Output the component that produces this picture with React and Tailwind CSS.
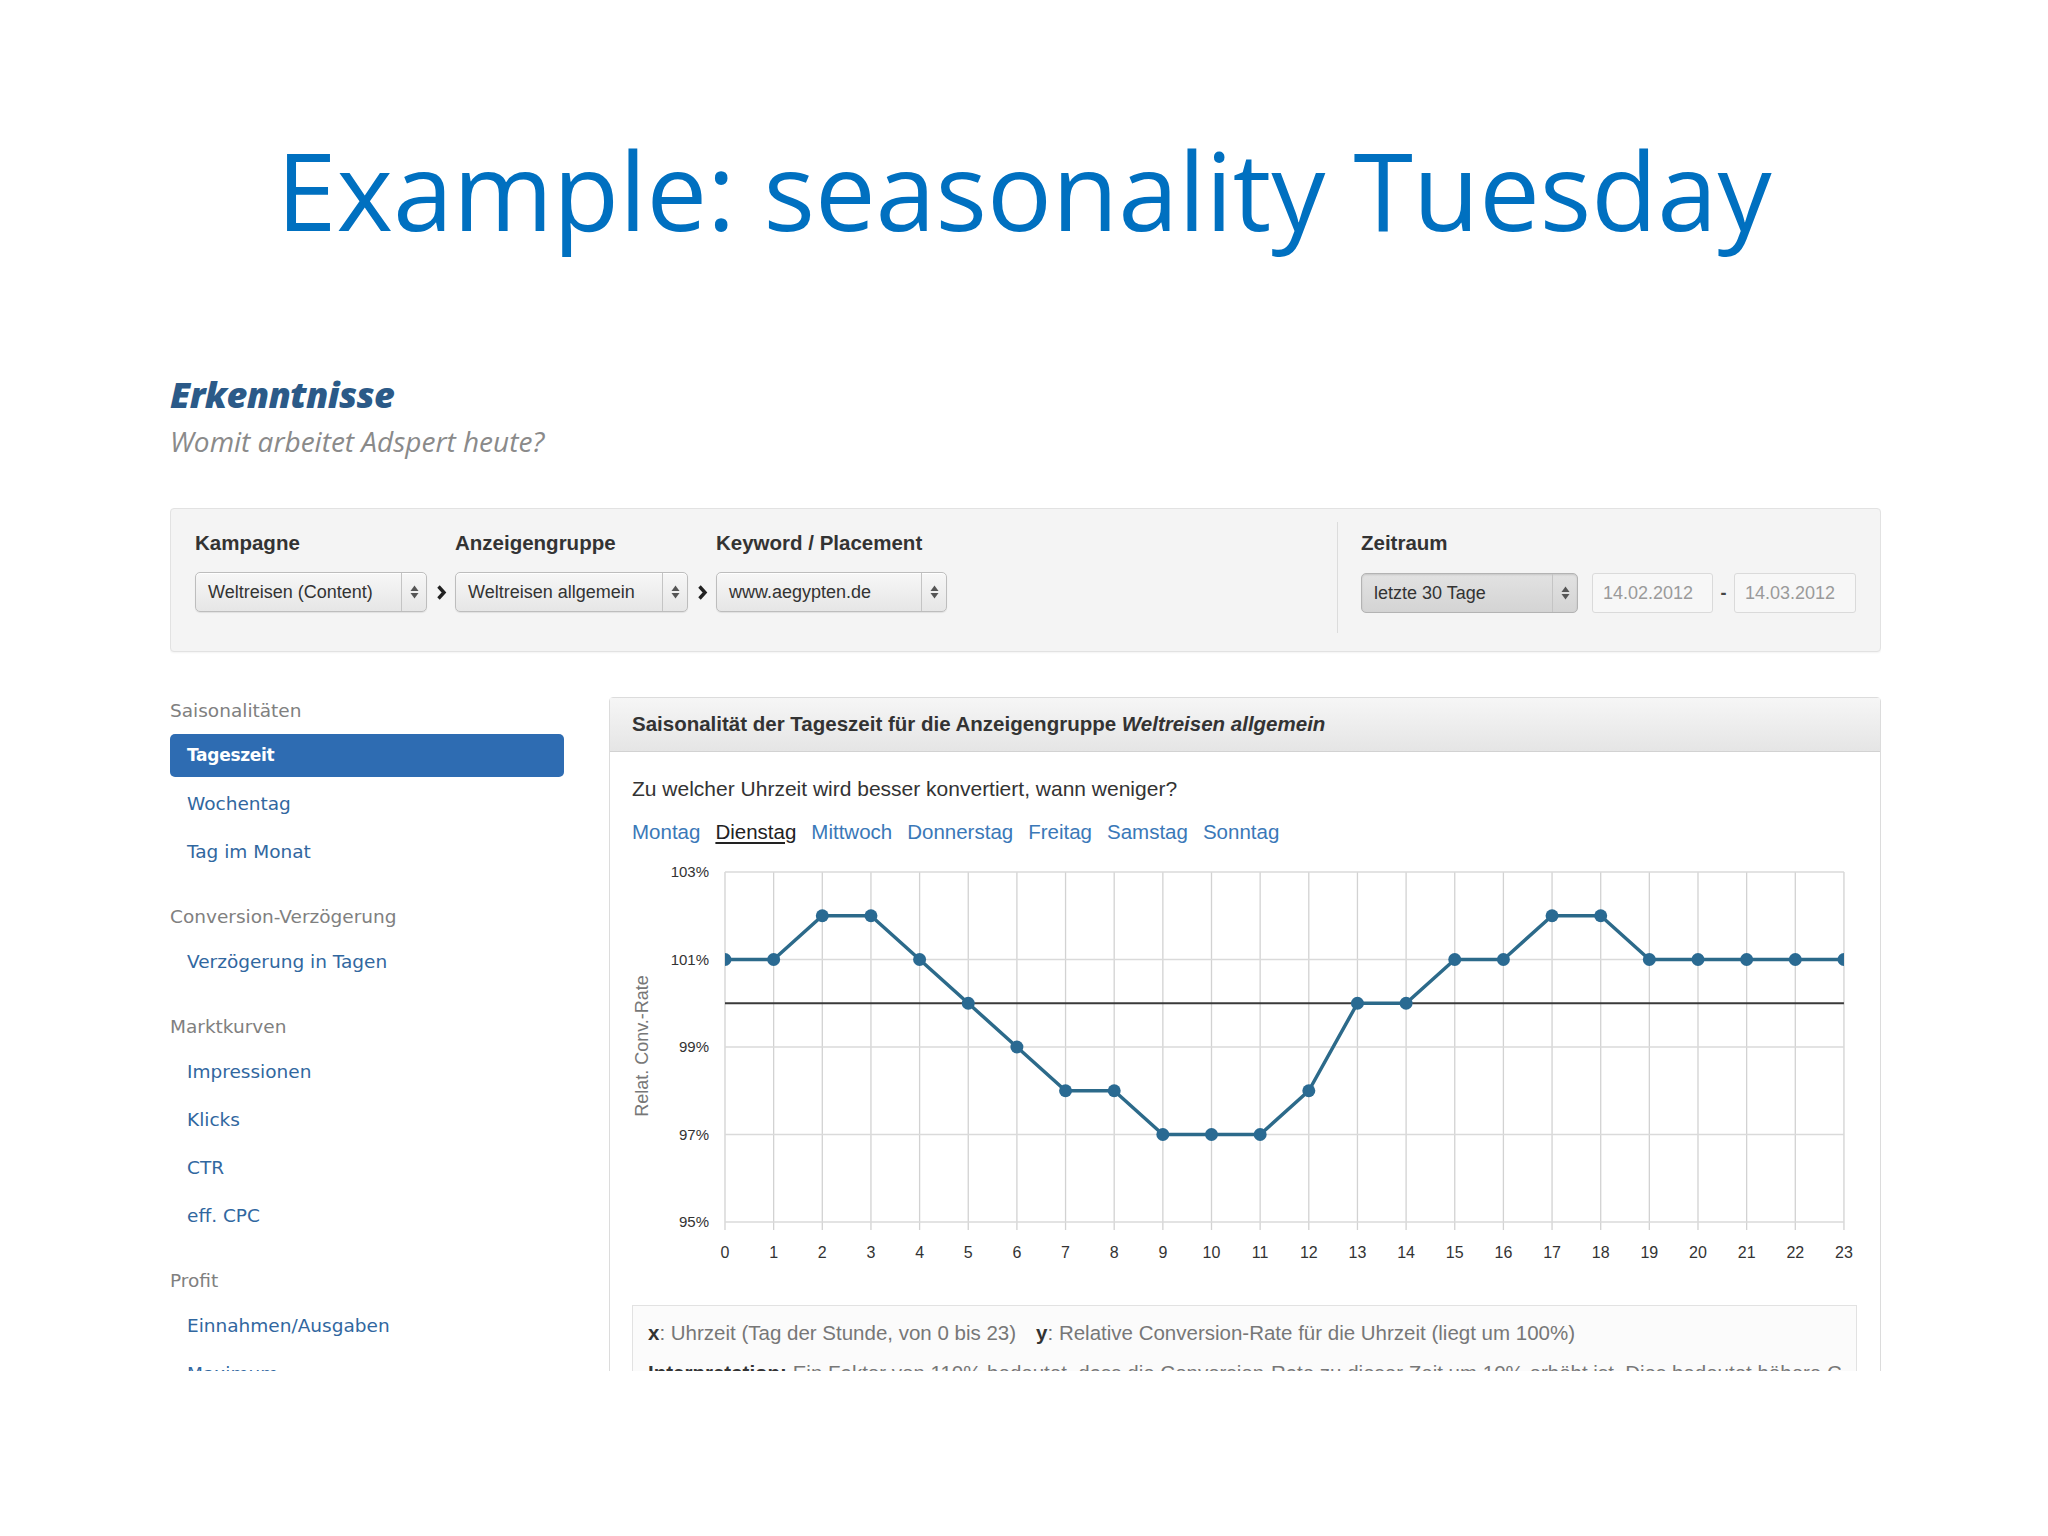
import React from "react";

// Data for the Dienstag (Tuesday) curve, hours 0..23
const VALUES = [101, 101, 102, 102, 101, 100, 99, 98, 98, 97, 97, 97, 98, 100, 100, 101, 101, 102, 102, 101, 101, 101, 101, 101];
const DAYS = ["Montag", "Dienstag", "Mittwoch", "Donnerstag", "Freitag", "Samstag", "Sonntag"];

const sx = (h) => 93 + h * 48.65;
const sy = (v) => 18 + (103 - v) * 43.75;

function UpDown() {
  return (
    <svg width="9" height="16" viewBox="0 0 9 16">
      <path d="M0.5 7 L4.5 1.5 L8.5 7 Z" fill="#555" />
      <path d="M0.5 9 L4.5 14.5 L8.5 9 Z" fill="#555" />
    </svg>
  );
}

function Select({ label, dark }) {
  return (
    <div
      className={`flex h-[40px] items-stretch rounded-[5px] border ${
        dark
          ? "border-[#b3b3b3] bg-gradient-to-b from-[#e2e2e2] to-[#d4d4d4] shadow-[inset_0_1px_2px_rgba(0,0,0,0.12)]"
          : "border-[#bdbdbd] bg-gradient-to-b from-[#f7f7f7] to-[#e6e6e6] shadow-[inset_0_1px_0_#fff,0_1px_1px_rgba(0,0,0,0.08)]"
      }`}
    >
      <div className="flex flex-1 items-center pl-[12px] text-[18px] text-[#333] whitespace-nowrap overflow-hidden">
        {label}
      </div>
      <div className="flex w-[25px] items-center justify-center border-l border-[#c4c4c4]">
        <UpDown />
      </div>
    </div>
  );
}

function Chevron() {
  return (
    <div className="mt-[63px] flex h-[40px] w-[28px] items-center justify-center">
      <svg width="11" height="15" viewBox="0 0 11 15">
        <path d="M2.5 1.5 L8 7.5 L2.5 13.5" fill="none" stroke="#222" strokeWidth="3.4" />
      </svg>
    </div>
  );
}

function Field({ label, width, children }) {
  return (
    <div className="mt-[22px] flex flex-col" style={{ width }}>
      <div className="text-[20.5px] font-bold leading-[24px] text-[#333]">{label}</div>
      <div className="mt-[17px]">{children}</div>
    </div>
  );
}

function FilterBar() {
  return (
    <div className="mt-[53px] flex h-[144px] items-start rounded-[4px] border border-[#e2e2e2] bg-[#f4f4f4] pl-[24px] pr-[24px] shadow-[0_1px_2px_rgba(0,0,0,0.05)]">
      <Field label="Kampagne" width={232}>
        <Select label="Weltreisen (Content)" />
      </Field>
      <Chevron />
      <Field label="Anzeigengruppe" width={233}>
        <Select label="Weltreisen allgemein" />
      </Field>
      <Chevron />
      <Field label="Keyword / Placement" width={231}>
        <Select label="www.aegypten.de" />
      </Field>
      <div className="flex-1" />
      <div className="mt-[13px] h-[111px] w-px bg-[#dcdcdc]" />
      <div className="ml-[23px] mt-[22px] flex flex-col">
        <div className="text-[20.5px] font-bold leading-[24px] text-[#333]">Zeitraum</div>
        <div className="mt-[18px] flex items-center">
          <div className="w-[217px]">
            <Select label="letzte 30 Tage" dark />
          </div>
          <div className="ml-[14px] flex h-[40px] w-[121px] items-center rounded-[3px] border border-[#dadada] bg-[#f7f7f7] pl-[10px] text-[18px] text-[#9a9a9a]">
            14.02.2012
          </div>
          <div className="flex w-[21px] justify-center text-[18px] font-bold text-[#444]">-</div>
          <div className="flex h-[40px] w-[122px] items-center rounded-[3px] border border-[#dadada] bg-[#f7f7f7] pl-[10px] text-[18px] text-[#9a9a9a]">
            14.03.2012
          </div>
        </div>
      </div>
    </div>
  );
}

function NavGroup({ title, items, active, first }) {
  return (
    <div className={first ? "" : "mt-[30px]"}>
      <div className="h-[28px] leading-[28px] text-[18.5px] text-[#808080]">{title}</div>
      <div className="mt-[9px] flex flex-col gap-[5px]">
        {items.map((it) =>
          it === active ? (
            <div
              key={it}
              className="flex h-[43px] items-center rounded-[5px] bg-[#2e6cb2] pl-[17px] text-[17px] font-bold tracking-[-0.3px] text-white"
            >
              {it}
            </div>
          ) : (
            <div key={it} className="flex h-[43px] items-center pl-[17px] text-[18.5px] text-[#31679f]">
              {it}
            </div>
          )
        )}
      </div>
    </div>
  );
}

function Sidebar() {
  return (
    <div className="w-[394px] font-['DejaVu_Sans',Verdana,sans-serif]">
      <NavGroup first title="Saisonalitäten" items={["Tageszeit", "Wochentag", "Tag im Monat"]} active="Tageszeit" />
      <NavGroup title="Conversion-Verzögerung" items={["Verzögerung in Tagen"]} />
      <NavGroup title="Marktkurven" items={["Impressionen", "Klicks", "CTR", "eff. CPC"]} />
      <NavGroup title="Profit" items={["Einnahmen/Ausgaben", "Maximum"]} />
    </div>
  );
}

function Chart() {
  const hours = VALUES.map((_, i) => i);
  const pts = VALUES.map((v, i) => `${sx(i)},${sy(v)}`).join(" ");
  return (
    <svg width="1225" height="420" viewBox="0 0 1225 420" className="mt-[9px] block">
      <defs>
        <clipPath id="plot">
          <rect x={sx(0)} y="0" width={sx(23) - sx(0)} height="420" />
        </clipPath>
      </defs>
      {hours.map((h) => (
        <line key={"v" + h} x1={sx(h)} x2={sx(h)} y1={sy(103)} y2={sy(95) + 8} stroke="#d2d2d2" strokeWidth="1.3" />
      ))}
      {[103, 101, 99, 97, 95].map((v) => (
        <line key={"h" + v} x1={sx(0)} x2={sx(23)} y1={sy(v)} y2={sy(v)} stroke="#dadada" strokeWidth="1.6" />
      ))}
      <line x1={sx(0)} x2={sx(23)} y1={sy(100)} y2={sy(100)} stroke="#3a3a3a" strokeWidth="2" />
      {[103, 101, 99, 97, 95].map((v) => (
        <text key={"l" + v} x="77" y={sy(v) + 5} textAnchor="end" fontSize="15" fill="#333">
          {v}%
        </text>
      ))}
      {hours.map((h) => (
        <text key={"x" + h} x={sx(h)} y="404" textAnchor="middle" fontSize="16" fill="#333">
          {h}
        </text>
      ))}
      <text x="16" y="192" transform="rotate(-90 16 192)" textAnchor="middle" fontSize="18" fill="#777">
        Relat.  Conv.-Rate
      </text>
      <g clipPath="url(#plot)">
        <polyline points={pts} fill="none" stroke="#2c6a8a" strokeWidth="3.5" strokeLinejoin="round" />
        {VALUES.map((v, i) => (
          <circle key={"c" + i} cx={sx(i)} cy={sy(v)} r="6.5" fill="#2a6a92" />
        ))}
      </g>
    </svg>
  );
}

function MainPanel() {
  return (
    <div className="ml-[45px] w-[1272px] rounded-t-[4px] border border-[#dcdcdc] font-['Liberation_Sans',Arial,sans-serif]">
      <div className="flex h-[54px] items-center border-b border-[#d2d2d2] bg-gradient-to-b from-[#f6f6f6] to-[#e5e5e5] pl-[22px] text-[20.5px] font-bold text-[#333]">
        Saisonalität der Tageszeit für die Anzeigengruppe&nbsp;<span className="italic">Weltreisen allgemein</span>
      </div>
      <div className="pl-[22px] pr-[23px] pt-[24px]">
        <div className="text-[21px] leading-[26px] text-[#333]">
          Zu welcher Uhrzeit wird besser konvertiert, wann weniger?
        </div>
        <div className="mt-[17px] flex gap-[15px] text-[20.5px] leading-[26px]">
          {DAYS.map((d) =>
            d === "Dienstag" ? (
              <span key={d} className="text-[#222] underline underline-offset-[3px]">
                {d}
              </span>
            ) : (
              <span key={d} className="text-[#3a78b8]">
                {d}
              </span>
            )
          )}
        </div>
        <Chart />
        <div className="mt-[31px] border border-[#e2e2e2] bg-[#fbfbfb] px-[15px] pt-[14px] pb-[20px] text-[20.5px] text-[#777]">
          <div className="leading-[26px] whitespace-nowrap">
            <b className="text-[#333]">x</b>: Uhrzeit (Tag der Stunde, von 0 bis 23)
            <span className="ml-[20px]">
              <b className="text-[#333]">y</b>: Relative Conversion-Rate für die Uhrzeit (liegt um 100%)
            </span>
          </div>
          <div className="mt-[14px] leading-[26px] whitespace-nowrap overflow-hidden">
            <b className="text-[#333]">Interpretation:</b> Ein Faktor von 110% bedeutet, dass die Conversion-Rate zu dieser Zeit um 10% erhöht ist. Dies bedeutet höhere CPC
          </div>
        </div>
      </div>
    </div>
  );
}

export default function App() {
  return (
    <div className="relative h-[1536px] w-[2048px] overflow-hidden bg-white">
      <div className="mt-[136px] text-center font-['Open_Sans',sans-serif] text-[108px] leading-none text-[#0070c0]">
        Example: seasonality Tuesday
      </div>

      {/* embedded app screenshot, cut off at the bottom */}
      <div className="ml-[170px] mt-[133px] h-[994px] w-[1711px] overflow-hidden">
        <div className="font-['Open_Sans',sans-serif] text-[36px] font-extrabold italic leading-none tracking-[-0.6px] text-[#2b5a88]">
          Erkenntnisse
        </div>
        <div className="mt-[14px] font-['Open_Sans',sans-serif] text-[28px] italic leading-none text-[#8a8a8a]">
          Womit arbeitet Adspert heute?
        </div>

        <div className="font-['Liberation_Sans',Arial,sans-serif]">
          <FilterBar />
        </div>

        <div className="mt-[45px] flex items-start">
          <Sidebar />
          <MainPanel />
        </div>
      </div>
    </div>
  );
}
